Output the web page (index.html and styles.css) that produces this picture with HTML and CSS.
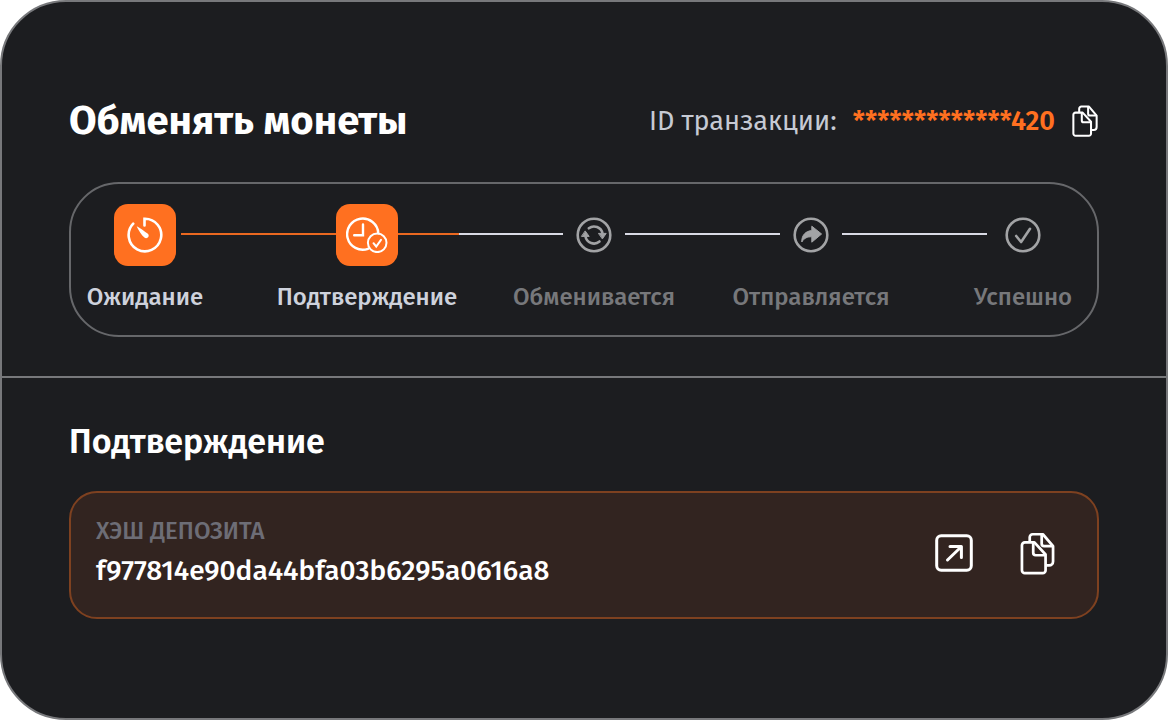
FILE: index.html
```
<!DOCTYPE html>
<html lang="ru">
  <head>
    <meta charset="utf-8">
    <meta name="viewport" content="width=device-width, initial-scale=1">
    <title>Обменять монеты</title>
    <link rel="stylesheet" href="styles.css">
  </head>
  <body>
    <svg class="sprite" aria-hidden="true">
      <symbol id="icon-copy" viewBox="0 0 36 44">
        <g fill="none" stroke="currentColor" stroke-width="2.8" stroke-linejoin="round">
          <path d="M26.3 34.3H30a4 4 0 0 0 4-4V14.5L23.500 2.200H13a3 3 0 0 0-3 3V10"/>
          <path d="M22.300 2.200V12a2.500 2.500 0 0 0 2.500 2.500H34"/>
          <path d="M5 10.500h9.800L26.300 23v16.300a3 3 0 0 1-3 3H5a3 3 0 0 1-3-3V13.500a3 3 0 0 1 3-3z"/>
          <path d="M13.600 10.500v10.800a2.500 2.500 0 0 0 2.500 2.500h10.200"/>
        </g>
      </symbol>
    </svg>

    <main class="card">
      <section class="exchange">
        <header class="exchange__header">
          <h1 class="exchange__title">Обменять монеты</h1>
          <div class="transaction">
            <span class="transaction__label">ID транзакции:</span>
            <span class="transaction__id">*************420</span>
            <button class="icon-btn" type="button" aria-label="Копировать ID">
              <svg class="icon-copy icon-copy--small"><use href="#icon-copy"/></svg>
            </button>
          </div>
        </header>

        <ol class="steps">
          <li class="step step--active">
            <span class="step__icon">
              <svg width="36" height="36" viewBox="0 0 36 36" fill="none" stroke="currentColor" stroke-width="2.6" stroke-linecap="round">
                <path d="M17.500 8.500V1.700A16.300 16.300 0 1 1 6.200 6.700"/>
                <path d="M9.700 9.200c3.200 1.700 8.200 5.400 11.200 7.600 2.300 2.400-.9 6-3.500 3.800-2.600-2.400-6.200-7.700-7.700-11.400z" fill="currentColor" stroke="none"/>
              </svg>
            </span>
            <span class="step__name">Ожидание</span>
          </li>
          <li class="line line--done" aria-hidden="true"></li>
          <li class="step step--active">
            <span class="step__icon">
              <svg width="42" height="36" viewBox="0 0 42 36" fill="none" stroke="currentColor" stroke-width="2.4" stroke-linecap="round">
                <path d="M22 31.800a15.600 15.600 0 1 1 10.300-15.600"/>
                <path d="M17 7.500V18.300H8.200"/>
                <circle cx="31.200" cy="25.800" r="9.300" stroke-width="2"/>
                <path d="M27.500 26.200l2.700 3.300 4.800-6.700" stroke-width="2"/>
              </svg>
            </span>
            <span class="step__name">Подтверждение</span>
          </li>
          <li class="line line--current" aria-hidden="true"></li>
          <li class="step">
            <span class="step__icon">
              <svg width="36" height="36" viewBox="0 0 36 36" fill="none" stroke="currentColor" stroke-width="2.6" stroke-linecap="round">
                <circle cx="18" cy="18" r="16.300"/>
                <path d="M12.800 11.300a8.600 8.600 0 0 1 13.700 5.200M23.500 24.500A8.600 8.600 0 0 1 9.500 19.500"/>
                <path d="M22.800 16.400h7.400l-3.600 5.200zM5.800 19.400h7.400l-3.800-5.200z" fill="currentColor" stroke-width="1" stroke-linejoin="round"/>
              </svg>
            </span>
            <span class="step__name">Обменивается</span>
          </li>
          <li class="line" aria-hidden="true"></li>
          <li class="step">
            <span class="step__icon">
              <svg width="36" height="36" viewBox="0 0 36 36" fill="none" stroke="currentColor" stroke-width="2.6">
                <circle cx="18" cy="18" r="16.300"/>
                <path d="M18.800 9.200l9.800 7.800-9.800 8.200v-5.400c-4.400-.2-7.600 1.200-10 5.200-.3-6.400 3.600-11 10-11.400z" fill="currentColor" stroke-width="1" stroke-linejoin="round"/>
              </svg>
            </span>
            <span class="step__name">Отправляется</span>
          </li>
          <li class="line line--last" aria-hidden="true"></li>
          <li class="step">
            <span class="step__icon">
              <svg width="36" height="36" viewBox="0 0 36 36" fill="none" stroke="currentColor" stroke-width="2.6" stroke-linecap="round" stroke-linejoin="round">
                <circle cx="18" cy="18" r="16.300"/>
                <path d="M11.200 19l4.900 6L25 11.800"/>
              </svg>
            </span>
            <span class="step__name">Успешно</span>
          </li>
        </ol>
      </section>

      <section class="confirm">
        <h2 class="confirm__title">Подтверждение</h2>
        <div class="hash">
          <div class="hash__text">
            <div class="hash__label">ХЭШ ДЕПОЗИТА</div>
            <div class="hash__value">f977814e90da44bfa03b6295a0616a8</div>
          </div>
          <div class="hash__actions">
            <a class="icon-btn" href="#" aria-label="Открыть транзакцию">
              <svg width="38" height="38" viewBox="0 0 38 38" fill="none" stroke="currentColor" stroke-width="3" stroke-linecap="round" stroke-linejoin="round">
                <rect x="1.700" y="1.700" width="34.600" height="34.600" rx="4.500"/>
                <path d="M12.500 26L26 13M15 12.600h11.400V23.500"/>
              </svg>
            </a>
            <button class="icon-btn" type="button" aria-label="Копировать хэш">
              <svg class="icon-copy"><use href="#icon-copy"/></svg>
            </button>
          </div>
        </div>
      </section>
    </main>
  </body>
</html>
```
FILE: styles.css
```
* {
  box-sizing: border-box;
}

body {
  margin: 0;
  background: #fff;
  color: #fff;
  font-family: "Fira Sans", "Noto Sans", sans-serif;
}

h1,
h2 {
  margin: 0;
}

.sprite {
  display: none;
}

.card {
  min-height: 100vh;
  background: #1c1d20;
  border: 2px solid #77787b;
  border-radius: 66px;
}

.exchange {
  padding: 94px 67px 39px;
  border-bottom: 2px solid #77787b;
}

.exchange__header {
  display: flex;
  align-items: center;
  justify-content: space-between;
  margin-bottom: 36px;
}

.exchange__title {
  font-size: 40px;
  font-weight: 700;
  line-height: 50px;
}

.transaction {
  display: flex;
  align-items: center;
  font-size: 27px;
  line-height: 36px;
}

.transaction__label {
  margin-right: 16px;
  color: #c6cad4;
}

.transaction__id {
  margin-right: 16px;
  color: #ff7020;
  font-weight: 600;
}

.icon-btn {
  display: flex;
  padding: 0;
  background: none;
  border: 0;
  color: #fff;
  cursor: pointer;
}

.icon-copy {
  width: 35px;
  height: 43px;
}

.icon-copy--small {
  width: 28px;
  height: 32px;
}

.steps {
  display: grid;
  grid-template-columns: 62px 32fr 62px 33fr 62px 31fr 62px 30fr 62px;
  margin: 0;
  padding: 20px 43px 24px;
  border: 2px solid #66676a;
  border-radius: 50px;
  list-style: none;
}

.step {
  display: flex;
  flex-direction: column;
  align-items: center;
  gap: 17px;
  color: #a2a3a5;
}

.step__icon {
  display: flex;
  align-items: center;
  justify-content: center;
  width: 62px;
  height: 62px;
  border-radius: 14px;
}

.step__name {
  color: #77787b;
  font-size: 24px;
  font-weight: 500;
  line-height: 28px;
  white-space: nowrap;
}

.step--active .step__icon {
  background: #ff7020;
  color: #fff;
}

.step--active .step__name {
  color: #ced2dc;
}

.line {
  height: 2px;
  margin-top: 29px;
  background: #d9dae4;
}

.line--done {
  margin-left: 5px;
  background: #ea6820;
}

.line--current {
  background: linear-gradient(to right, #ea6820 37%, #d9dae4 37%);
}

.line--last {
  margin-right: 5px;
}

.confirm {
  padding: 42px 67px 60px;
}

.confirm__title {
  margin-bottom: 27px;
  font-size: 34px;
  font-weight: 600;
  line-height: 44px;
}

.hash {
  display: flex;
  align-items: center;
  justify-content: space-between;
  padding: 22px 42px 26px 25px;
  background: #322420;
  border: 2px solid #7e4120;
  border-radius: 28px;
}

.hash__label {
  margin-bottom: 4px;
  color: #6d6d76;
  font-size: 24px;
  font-weight: 500;
  line-height: 32px;
}

.hash__value {
  font-size: 28px;
  font-weight: 500;
  line-height: 40px;
}

.hash__actions {
  display: flex;
  align-items: center;
  gap: 47px;
}
```
